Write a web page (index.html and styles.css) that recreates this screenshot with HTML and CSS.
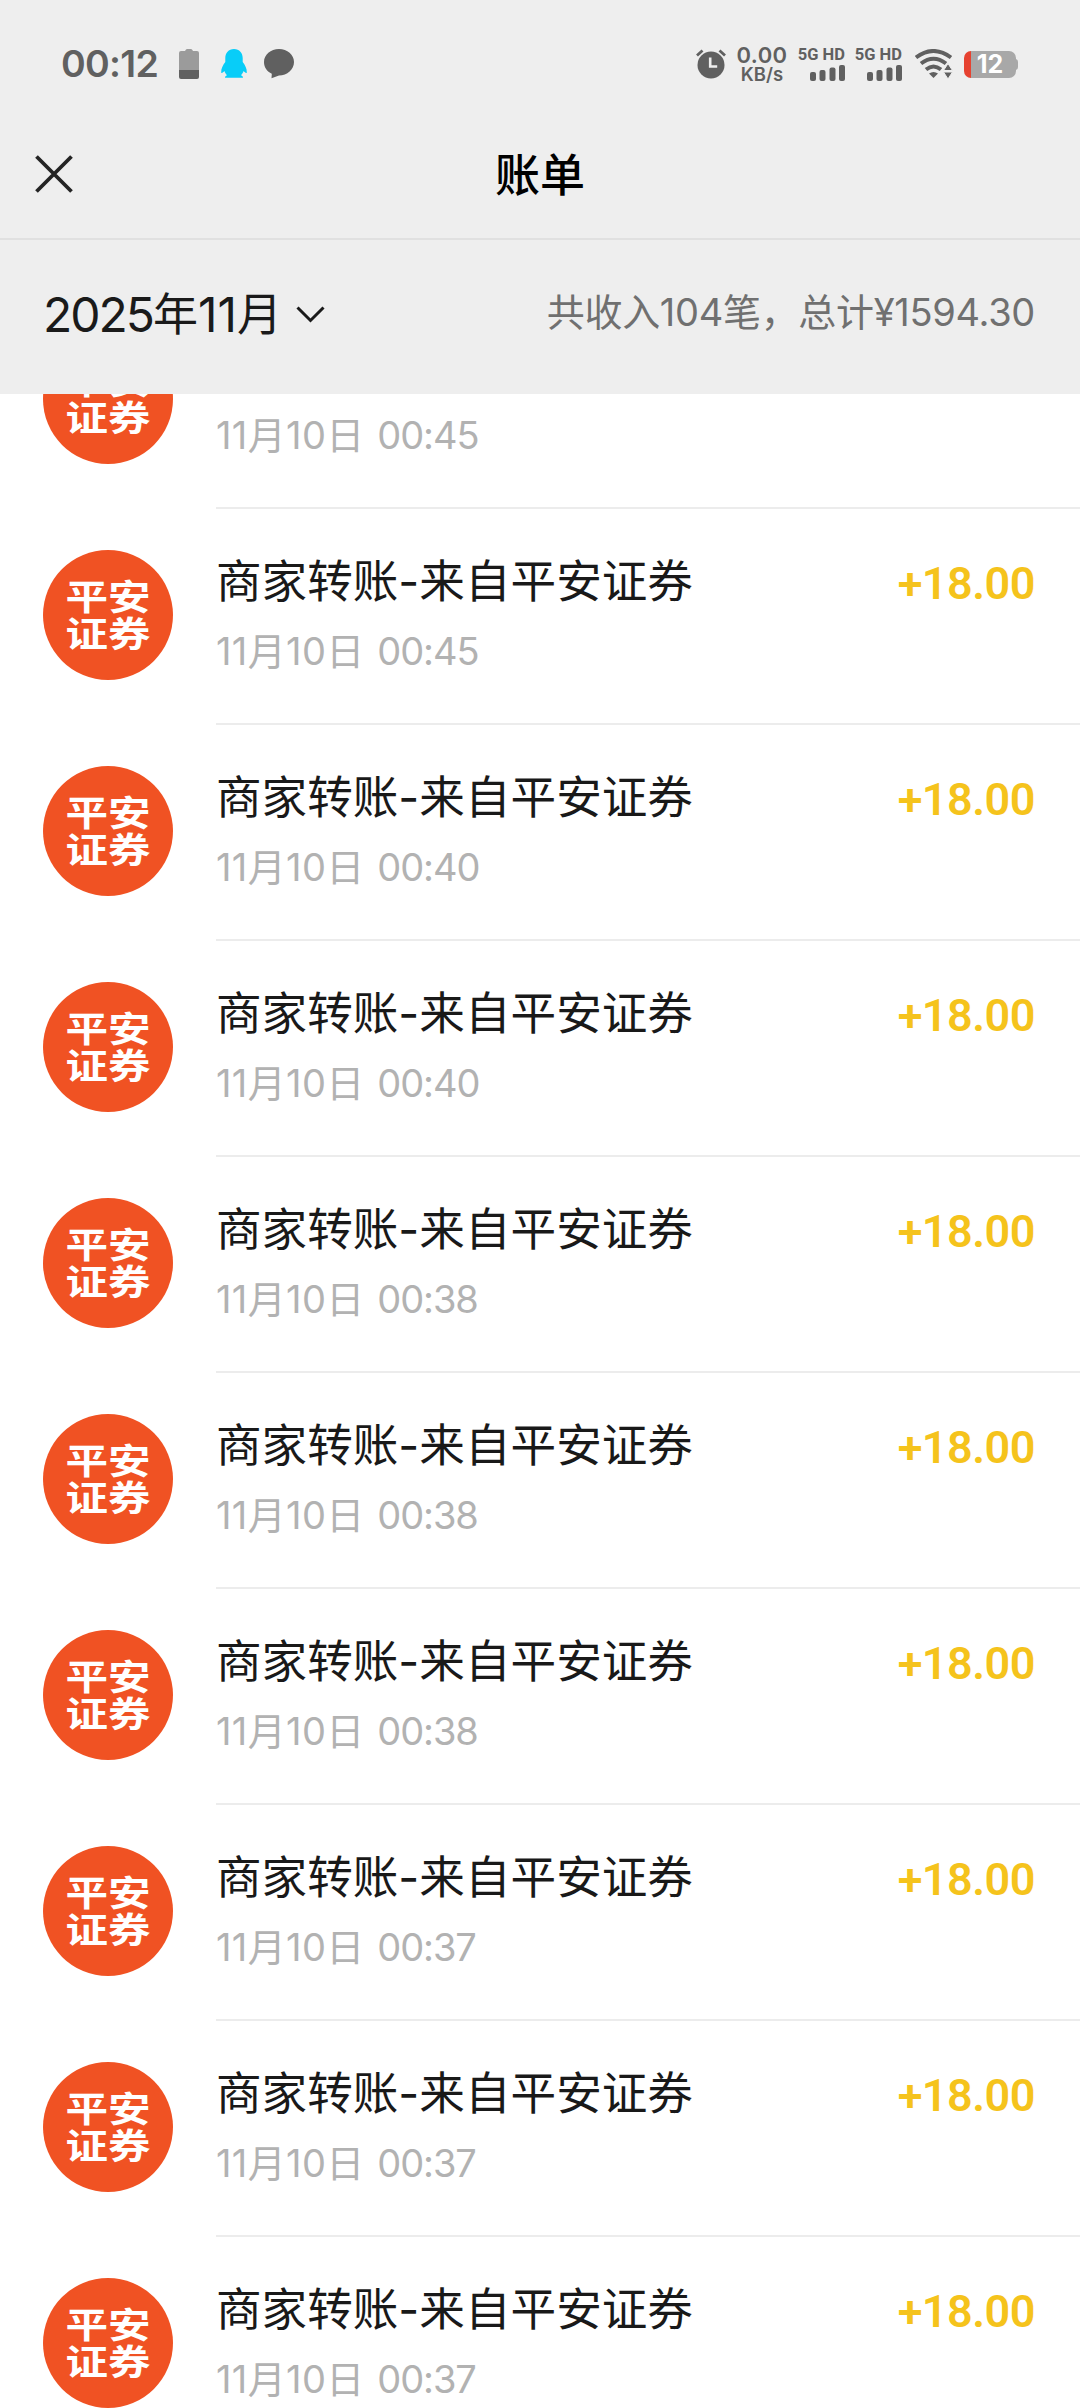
FILE: index.html
```html
<!DOCTYPE html>
<html lang="zh-CN">
<head>
<meta charset="utf-8">
<title>账单</title>
<link rel="stylesheet" href="styles.css">
</head>
<body>
<div class="status">
  <span class="clock">00:12</span>
  <svg class="cell" width="20" height="30" viewBox="0 0 20 30"><path d="M2 2h4q1-2 2-2h4q1 0 2 2h4q2 0 2 2v18H0V4q0-2 2-2z" fill="#9b9b9b"/><path d="M0 21h20v7q0 2-2 2H2q-2 0-2-2z" fill="#616161"/></svg>
  <svg class="penguin" width="26" height="30" viewBox="0 0 26 30"><path d="M13 0C7.500 0 4.300 4 4.300 9v4C2 16 0 19.500 .2 23.500c.5 1.500 2-.3 3.200-1.400.6 1.700 1.400 3 2.600 4.100-1.300.5-2 1.200-2 2.600h18c0-1.400-.7-2.100-2-2.600 1.200-1.100 2-2.400 2.600-4.100 1.200 1.100 2.700 2.900 3.200 1.400.2-4-1.800-7.500-4.100-10.500V9C21.700 4 18.500 0 13 0z" fill="#08cdf8"/></svg>
  <svg class="bubble" width="30" height="30" viewBox="0 0 30 30"><path d="M15 0c8.300 0 15 5.800 15 13s-6.700 13.500-15 13.500l-7.500 2.800.3-4.600C3 22.500 0 18.200 0 13 0 5.800 6.700 0 15 0z" fill="#606060"/></svg>
  <div class="status-right">
    <svg width="30" height="30" viewBox="0 0 30 30"><circle cx="15" cy="16" r="13.500" fill="#606060"/><path d="M1 6.500l5.500-5M29 6.500l-5.500-5" stroke="#606060" stroke-width="2.800"/><path d="M14.200 8.500v9h7" fill="none" stroke="#eee" stroke-width="2.600"/></svg>
    <div class="speed"><span>0.00</span><small>KB/s</small></div>
    <div class="sim"><span>5G HD</span><svg width="35" height="16" viewBox="0 0 35 16" fill="#606060"><rect y="7" width="6" height="9" rx="2"/><rect x="9.500" y="5" width="6" height="11" rx="2"/><rect x="19.500" y="2.500" width="6" height="13.500" rx="2"/><rect x="29" width="6" height="16" rx="2"/></svg></div>
    <div class="sim second"><span>5G HD</span><svg width="35" height="16" viewBox="0 0 35 16" fill="#606060"><rect y="7" width="6" height="9" rx="2"/><rect x="9.500" y="5" width="6" height="11" rx="2"/><rect x="19.500" y="2.500" width="6" height="13.500" rx="2"/><rect x="29" width="6" height="16" rx="2"/></svg></div>
    <svg class="wifi" width="38" height="30" viewBox="0 0 38 30"><g fill="none" stroke="#606060" stroke-width="4"><path d="M1 8.500Q18.500-4.500 36 8.500"/><path d="M6 14.500Q18.500 5 31 14.500"/><path d="M11 20.500q7.500-6 15 0"/></g><path d="M14 24.500q4.500-3 9 0L18.500 29z" fill="#606060"/><path d="M28.500 21.500l4.500-7 4.500 7zM28.500 23l4.500 7 4.500-7z" fill="#606060" stroke="#eee"/></svg>
    <div class="battery">12</div>
  </div>
</div>
<header class="nav">
  <svg width="38" height="38" viewBox="0 0 38 38"><path d="M1.500 1.500l35 35M36.500 1.500l-35 35" stroke="#242424" stroke-width="3.800"/></svg>
  <h1>账单</h1>
</header>
<section class="filter">
  <div class="month"><span class="year">2025</span>年<span class="year eleven">11</span>月
    <svg width="29" height="17" viewBox="0 0 29 17"><path d="M1.500 1.500l13 13 13-13" fill="none" stroke="#1a1a1a" stroke-width="3"/></svg>
  </div>
  <div class="total">共收入104笔，总计¥1594.30</div>
</section>
<main class="list">
  <article class="row"><div class="logo"><span>平安</span><span>证券</span></div><div class="info"><div class="what"><h2>商家转账-来自平安证券</h2><time>11月10日 <span>00:45</span></time></div><b>+18.00</b></div></article>
  <article class="row"><div class="logo"><span>平安</span><span>证券</span></div><div class="info"><div class="what"><h2>商家转账-来自平安证券</h2><time>11月10日 <span>00:45</span></time></div><b>+18.00</b></div></article>
  <article class="row"><div class="logo"><span>平安</span><span>证券</span></div><div class="info"><div class="what"><h2>商家转账-来自平安证券</h2><time>11月10日 <span>00:40</span></time></div><b>+18.00</b></div></article>
  <article class="row"><div class="logo"><span>平安</span><span>证券</span></div><div class="info"><div class="what"><h2>商家转账-来自平安证券</h2><time>11月10日 <span>00:40</span></time></div><b>+18.00</b></div></article>
  <article class="row"><div class="logo"><span>平安</span><span>证券</span></div><div class="info"><div class="what"><h2>商家转账-来自平安证券</h2><time>11月10日 <span>00:38</span></time></div><b>+18.00</b></div></article>
  <article class="row"><div class="logo"><span>平安</span><span>证券</span></div><div class="info"><div class="what"><h2>商家转账-来自平安证券</h2><time>11月10日 <span>00:38</span></time></div><b>+18.00</b></div></article>
  <article class="row"><div class="logo"><span>平安</span><span>证券</span></div><div class="info"><div class="what"><h2>商家转账-来自平安证券</h2><time>11月10日 <span>00:38</span></time></div><b>+18.00</b></div></article>
  <article class="row"><div class="logo"><span>平安</span><span>证券</span></div><div class="info"><div class="what"><h2>商家转账-来自平安证券</h2><time>11月10日 <span>00:37</span></time></div><b>+18.00</b></div></article>
  <article class="row"><div class="logo"><span>平安</span><span>证券</span></div><div class="info"><div class="what"><h2>商家转账-来自平安证券</h2><time>11月10日 <span>00:37</span></time></div><b>+18.00</b></div></article>
  <article class="row"><div class="logo"><span>平安</span><span>证券</span></div><div class="info"><div class="what"><h2>商家转账-来自平安证券</h2><time>11月10日 <span>00:37</span></time></div><b>+18.00</b></div></article>
</main>
</body>
</html>
```
FILE: styles.css
```css
* { box-sizing: border-box; margin: 0; }
body {
  width: 1080px;
  height: 2408px;
  overflow: hidden;
  display: flex;
  flex-direction: column;
  background: #fff;
  font-family: Inter, "Noto Sans CJK SC", sans-serif;
  white-space: nowrap;
}
svg { display: block; flex: none; }

.status {
  height: 112px;
  padding: 16px 60px 0 61px;
  display: flex;
  align-items: center;
  background: #eee;
  color: #606060;
}
.clock { width: 97px; font-size: 37.500px; font-weight: 600; line-height: 40px; letter-spacing: -.7px; }
.cell { margin-left: 21px; }
.penguin { margin-left: 22px; }
.bubble { margin-left: 17px; }
.status-right { margin-left: auto; display: flex; align-items: center; }
.speed { width: 50px; margin-left: 11px; display: flex; flex-direction: column; align-items: center; font-weight: 600; }
.speed span { font-size: 22px; line-height: 20px; letter-spacing: .4px; }
.speed small { font-size: 18.500px; line-height: 18px; }
.sim { width: 47px; margin-left: 11px; display: flex; flex-direction: column; align-items: flex-end; gap: 2px; }
.second { margin-left: 10px; }
.sim span { font: 700 16.500px/16px Roboto, sans-serif; }
.wifi { margin: 0 11px 0 13px; }
.battery {
  width: 52px;
  height: 27px;
  margin-right: 4px;
  border-radius: 7px;
  position: relative;
  background: linear-gradient(90deg, #e64230 7px, #a8a8a8 7px);
  color: #fff;
  font-size: 25px;
  font-weight: 700;
  line-height: 27px;
  text-align: center;
}
.battery::after { content: ""; position: absolute; left: 51px; top: 8px; width: 3px; height: 11px; border-radius: 0 3px 3px 0; background: #a8a8a8; }

.nav {
  height: 128px;
  padding: 0 35px;
  display: grid;
  grid-template-columns: 38px 1fr 38px;
  align-items: center;
  background: #eee;
  border-bottom: 2px solid #e0e0e0;
}
.nav svg { margin-bottom: 3px; }
.nav h1 { padding-top: 1px; font-size: 45px; font-weight: 500; line-height: 60px; text-align: center; color: #000; }

.filter {
  height: 154px;
  padding: 0 45px 5px 43px;
  display: flex;
  align-items: center;
  justify-content: space-between;
  background: #eee;
}
.month { display: flex; align-items: center; font-size: 45px; line-height: 60px; color: #1a1a1a; }
.year { font-size: 48px; letter-spacing: -2px; }
.eleven { letter-spacing: 0; }
.month svg { margin-left: 14px; }
.total { padding-bottom: 5px; font-size: 38px; line-height: 50px; letter-spacing: -.3px; color: #707070; }

.list { flex: 1; min-height: 0; overflow: hidden; display: flex; flex-direction: column; }
.row { flex: none; height: 216px; padding-left: 43px; display: flex; gap: 43px; }
.row:first-child { margin-top: -101px; }
.logo {
  flex: none;
  width: 130px;
  height: 130px;
  margin-top: 41px;
  padding-bottom: 4px;
  border-radius: 50%;
  background: #f05223;
  color: #fff;
  display: flex;
  flex-direction: column;
  align-items: center;
  justify-content: center;
}
.logo span { font: 700 42.500px/37px "Noto Sans CJK SC", sans-serif; transform: scaleY(.84); }
.info {
  flex: 1;
  padding: 41px 45px 0 0;
  display: flex;
  justify-content: space-between;
  border-bottom: 2px solid #ececec;
}
.what { display: flex; flex-direction: column; gap: 12px; }
.what h2 { font-size: 45.600px; font-weight: 400; line-height: 64px; color: #191919; }
.what time { font-size: 38px; line-height: 50px; letter-spacing: .4px; word-spacing: 1.500px; color: #b2b2b2; }
.what time span { letter-spacing: -1.100px; }
.info b { font: 600 45px/68px Roboto, sans-serif; letter-spacing: -.5px; color: #f5c31c; }
```
